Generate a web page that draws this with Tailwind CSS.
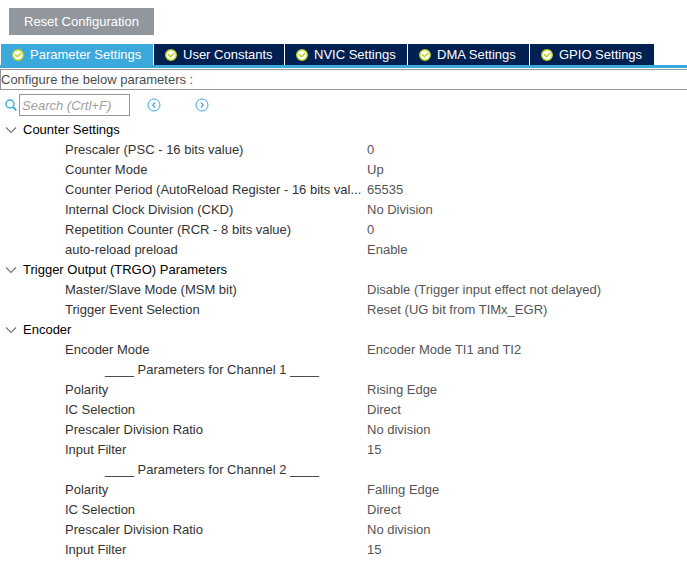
<!DOCTYPE html>
<html lang="en">
<head>
<meta charset="utf-8">
<meta name="viewport" content="width=device-width, initial-scale=1">
<title>Parameter Settings</title>
<script src="https://cdn.jsdelivr.net/npm/@tailwindcss/browser@4"></script>
</head>
<body class="bg-white font-['Liberation_Sans',Arial,sans-serif] text-[13px] leading-5 text-[#333333]">
<svg class="hidden" aria-hidden="true">
  <symbol id="check" viewBox="0 0 12 12">
    <circle cx="6" cy="6" r="5.3" fill="#fff" stroke="#bccf1c" stroke-width="1.4"/>
    <path d="M3 5.2 5.5 7.7 9.2 4" fill="none" stroke="#bccf1c" stroke-width="1.4"/>
  </symbol>
  <symbol id="chevron" viewBox="0 0 12 8">
    <path d="M1 1.5 6 6.5 11 1.5" fill="none" stroke="#777" stroke-width="1.2"/>
  </symbol>
</svg>

<header class="px-[9px] pt-2 pb-[9px]">
  <button type="button" class="h-[27px] bg-[#91979c] px-[15px] text-white">Reset Configuration</button>
</header>

<nav class="flex h-6 gap-px border-b-3 border-[#3ba9dc] pl-px text-white">
  <a href="#parameters" class="flex w-[152px] items-center gap-1.5 bg-[#3ba9dc] pl-[11px]" aria-current="page"><svg class="size-3"><use href="#check"/></svg>Parameter Settings</a>
  <a href="#user" class="flex w-[130px] items-center gap-1.5 bg-[#002052] pl-[11px]"><svg class="size-3"><use href="#check"/></svg>User Constants</a>
  <a href="#nvic" class="flex w-[122px] items-center gap-1.5 bg-[#002052] pl-[11px]"><svg class="size-3"><use href="#check"/></svg>NVIC Settings</a>
  <a href="#dma" class="flex w-[121px] items-center gap-1.5 bg-[#002052] pl-[11px]"><svg class="size-3"><use href="#check"/></svg>DMA Settings</a>
  <a href="#gpio" class="flex w-[124px] items-center gap-1.5 bg-[#002052] pl-[11px]"><svg class="size-3"><use href="#check"/></svg>GPIO Settings</a>
</nav>

<main id="parameters">
  <p class="mt-px h-[21px] border-y border-l border-[#91979c] text-[#4d4d4d]">Configure the below parameters :</p>

  <div class="flex h-[30px] items-center pl-[5px]">
    <label for="search" class="w-3.5" aria-label="Search">
      <svg class="size-3" viewBox="0 0 12 12" fill="none" stroke="#3ba9dc"><circle cx="5" cy="5" r="4" stroke-width="1.4"/><path d="M8 8 11.3 11.3" stroke-width="1.8"/></svg>
    </label>
    <input id="search" type="text" placeholder="Search (Crtl+F)" class="h-[22px] w-[111px] border border-[#91979c] px-0.5 italic placeholder:text-[#a0a0a0]">
    <button type="button" aria-label="Previous" class="ml-[17px]"><svg class="size-3.5" viewBox="0 0 14 14" fill="none" stroke="#3ba9dc"><circle cx="7" cy="7" r="6"/><path d="M8.2 4.5 5.7 7 8.2 9.5" stroke-width="1.1"/></svg></button>
    <button type="button" aria-label="Next" class="ml-[34px]"><svg class="size-3.5" viewBox="0 0 14 14" fill="none" stroke="#3ba9dc"><circle cx="7" cy="7" r="6"/><path d="M5.8 4.5 8.3 7 5.8 9.5" stroke-width="1.1"/></svg></button>
  </div>

  <table class="w-full table-fixed border-collapse whitespace-nowrap text-left [&_td]:p-0 [&_td]:text-[#555555] [&_th]:p-0 [&_th]:font-normal [&_tr]:h-5">
    <colgroup><col class="w-[367px]"><col></colgroup>
    <tbody>
      <tr><th colspan="2" class="text-black"><button type="button" class="flex items-center gap-1.5 pl-[5px]"><svg class="h-2 w-3"><use href="#chevron"/></svg>Counter Settings</button></th></tr>
      <tr><th scope="row"><span class="pl-[65px]">Prescaler (PSC - 16 bits value)</span></th><td>0</td></tr>
      <tr><th scope="row"><span class="pl-[65px]">Counter Mode</span></th><td>Up</td></tr>
      <tr><th scope="row"><span class="pl-[65px]">Counter Period (AutoReload Register - 16 bits val...</span></th><td>65535</td></tr>
      <tr><th scope="row"><span class="pl-[65px]">Internal Clock Division (CKD)</span></th><td>No Division</td></tr>
      <tr><th scope="row"><span class="pl-[65px]">Repetition Counter (RCR - 8 bits value)</span></th><td>0</td></tr>
      <tr><th scope="row"><span class="pl-[65px]">auto-reload preload</span></th><td>Enable</td></tr>
    </tbody>
    <tbody>
      <tr><th colspan="2" class="text-black"><button type="button" class="flex items-center gap-1.5 pl-[5px]"><svg class="h-2 w-3"><use href="#chevron"/></svg>Trigger Output (TRGO) Parameters</button></th></tr>
      <tr><th scope="row"><span class="pl-[65px]">Master/Slave Mode (MSM bit)</span></th><td>Disable (Trigger input effect not delayed)</td></tr>
      <tr><th scope="row"><span class="pl-[65px]">Trigger Event Selection</span></th><td>Reset (UG bit from TIMx_EGR)</td></tr>
    </tbody>
    <tbody>
      <tr><th colspan="2" class="text-black"><button type="button" class="flex items-center gap-1.5 pl-[5px]"><svg class="h-2 w-3"><use href="#chevron"/></svg>Encoder</button></th></tr>
      <tr><th scope="row"><span class="pl-[65px]">Encoder Mode</span></th><td>Encoder Mode TI1 and TI2</td></tr>
      <tr><th colspan="2"><span class="pl-[105px]">____ Parameters for Channel 1 ____</span></th></tr>
      <tr><th scope="row"><span class="pl-[65px]">Polarity</span></th><td>Rising Edge</td></tr>
      <tr><th scope="row"><span class="pl-[65px]">IC Selection</span></th><td>Direct</td></tr>
      <tr><th scope="row"><span class="pl-[65px]">Prescaler Division Ratio</span></th><td>No division</td></tr>
      <tr><th scope="row"><span class="pl-[65px]">Input Filter</span></th><td>15</td></tr>
      <tr><th colspan="2"><span class="pl-[105px]">____ Parameters for Channel 2 ____</span></th></tr>
      <tr><th scope="row"><span class="pl-[65px]">Polarity</span></th><td>Falling Edge</td></tr>
      <tr><th scope="row"><span class="pl-[65px]">IC Selection</span></th><td>Direct</td></tr>
      <tr><th scope="row"><span class="pl-[65px]">Prescaler Division Ratio</span></th><td>No division</td></tr>
      <tr><th scope="row"><span class="pl-[65px]">Input Filter</span></th><td>15</td></tr>
    </tbody>
  </table>
</main>
</body>
</html>
